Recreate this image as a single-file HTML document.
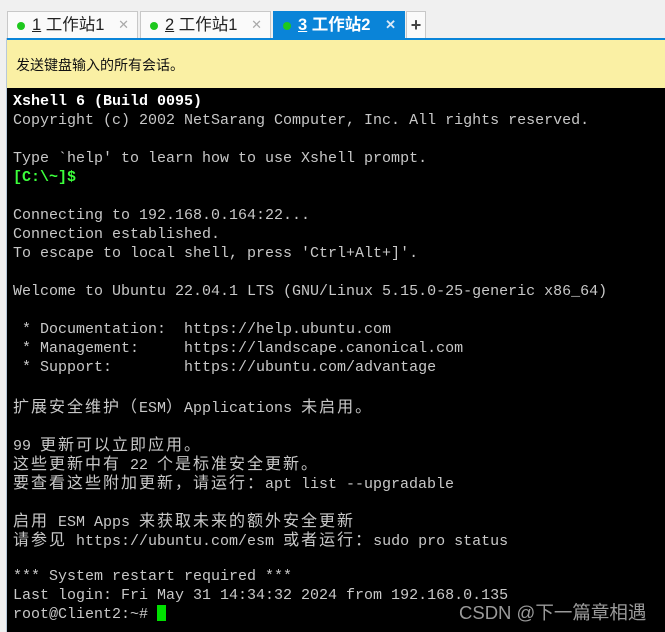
<!DOCTYPE html>
<html><head><meta charset="utf-8"><style>
*{margin:0;padding:0;box-sizing:border-box}
body{width:665px;height:632px;overflow:hidden;background:#f0f0f0;position:relative;font-family:"Liberation Sans","Noto Sans CJK SC",sans-serif}
.tab{position:absolute;top:11px;height:28px;border:1px solid #c8c8c8;border-bottom:none;background:#fafafa;font-size:16.5px;color:#222;line-height:26px}
.tab .d{position:absolute;left:9px;top:10px;width:8px;height:8px;border-radius:50%;background:#1ec81e}
.tab .t{position:absolute;left:24px;top:0}
.tab .x{position:absolute;right:8px;top:0;color:#aaa;font-size:13px}
.tab.a{background:#0a84d8;color:#fff;border-color:#0a84d8;font-weight:bold}
.tab.a .x{color:#dbe9f7}
.bar{position:absolute;left:7px;top:38px;width:658px;height:50px;background:#faf0a4;border-top:2px solid #0a84d8;font-size:14px;line-height:50px;padding-left:9px;color:#111}
.term{position:absolute;left:7px;top:88px;width:658px;height:544px;background:#000}
.p{position:absolute;left:13px;top:92px;font-family:"Liberation Mono","Noto Sans CJK SC",monospace;font-size:15px;color:#c8c8c8}
.p div{height:19px;line-height:19px;white-space:pre}
.c{letter-spacing:2px;font-size:16px;font-family:"Noto Sans CJK SC",sans-serif;line-height:19px}
.w{color:#fff;font-weight:bold}
.g{color:#3cff3c;font-weight:bold}
.cur{display:inline-block;width:9px;height:16px;background:#00e000;vertical-align:-3px}
.wm{position:absolute;left:459px;top:599px;color:#9a9a9a;font-size:18.5px;font-family:"Liberation Sans","Noto Sans CJK SC",sans-serif}
</style></head><body>
<div style="position:absolute;left:6px;top:38px;width:1px;height:594px;background:#b8c8d8"></div>
<div class="tab" style="left:7px;width:131px"><span class="d"></span><span class="t"><u>1</u> 工作站1</span><span class="x">✕</span></div>
<div class="tab" style="left:140px;width:131px"><span class="d"></span><span class="t"><u>2</u> 工作站1</span><span class="x">✕</span></div>
<div class="tab a" style="left:273px;width:132px"><span class="d"></span><span class="t"><u>3</u> 工作站2</span><span class="x">✕</span></div>
<div class="tab" style="left:406px;width:20px;text-align:center;font-size:18px;font-weight:bold;color:#444">+</div>
<div class="bar">发送键盘输入的所有会话。</div>
<div class="term"></div>
<div class="p">
<div><span class="w">Xshell 6 (Build 0095)</span></div>
<div>Copyright (c) 2002 NetSarang Computer, Inc. All rights reserved.</div>
<div></div>
<div>Type `help' to learn how to use Xshell prompt.</div>
<div><span class="g">[C:\~]$</span></div>
<div></div>
<div>Connecting to 192.168.0.164:22...</div>
<div>Connection established.</div>
<div>To escape to local shell, press 'Ctrl+Alt+]'.</div>
<div></div>
<div>Welcome to Ubuntu 22.04.1 LTS (GNU/Linux 5.15.0-25-generic x86_64)</div>
<div></div>
<div> * Documentation:  https://help.ubuntu.com</div>
<div> * Management:     https://landscape.canonical.com</div>
<div> * Support:        https://ubuntu.com/advantage</div>
<div></div>
<div><span class="c">扩展安全维护（</span>ESM<span class="c">）</span>Applications <span class="c">未启用。</span></div>
<div></div>
<div>99 <span class="c">更新可以立即应用。</span></div>
<div><span class="c">这些更新中有</span> 22 <span class="c">个是标准安全更新。</span></div>
<div><span class="c">要查看这些附加更新，请运行：</span>apt list --upgradable</div>
<div></div>
<div><span class="c">启用</span> ESM Apps <span class="c">来获取未来的额外安全更新</span></div>
<div><span class="c">请参见</span> https://ubuntu.com/esm <span class="c">或者运行：</span>sudo pro status</div>
<div></div>
<div>*** System restart required ***</div>
<div>Last login: Fri May 31 14:34:32 2024 from 192.168.0.135</div>
<div>root@Client2:~# <span class="cur"></span></div>
</div>
<div class="wm">CSDN @下一篇章相遇</div>
</body></html>
